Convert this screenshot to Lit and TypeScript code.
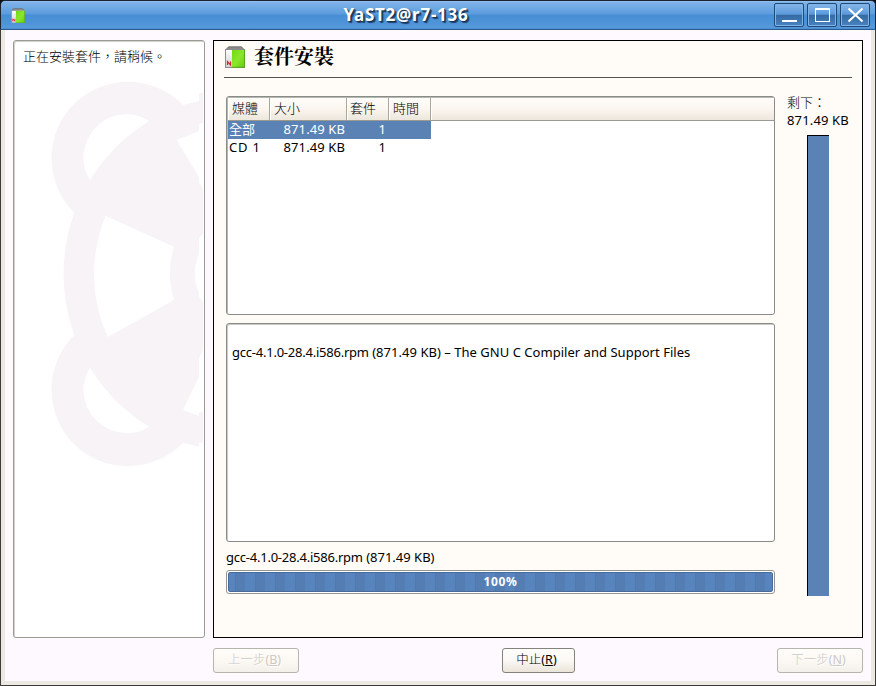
import { LitElement, html, css, svg } from "lit";
import { customElement, property } from "lit/decorators.js";

@customElement("package-icon")
class PackageIcon extends LitElement {
  @property({ type: Number }) size = 20;
  static styles = css`
    :host { display: block; line-height: 0; }
  `;
  render() {
    return html`<svg width=${this.size} height=${this.size * 1.1} viewBox="0 0 20 22">
      <defs>
        <linearGradient id="g" x1="0" y1="0" x2="1" y2="1">
          <stop offset="0" stop-color="#6fdc10"></stop>
          <stop offset="0.5" stop-color="#8be62e"></stop>
          <stop offset="1" stop-color="#62cf0a"></stop>
        </linearGradient>
        <linearGradient id="w" x1="0" y1="0" x2="0" y2="1">
          <stop offset="0" stop-color="#ffffff"></stop>
          <stop offset="1" stop-color="#cfcfd6"></stop>
        </linearGradient>
      </defs>
      <path d="M0.5 4 L3.5 0.8 H16.5 L19.5 4 Z" fill="#8c8c8c" stroke="#666" stroke-width="0.8"></path>
      <rect x="0.5" y="3.5" width="19" height="18" fill="url(#w)" stroke="#8b8b90"></rect>
      <path d="M7 4H19.5V21.5H7Z" fill="url(#g)"></path>
      <path d="M7 21.3H19.5V4" fill="none" stroke="#5aa51c"></path>
      ${svg`<path d="M2.500 19V15.500L5.500 19V15.500" fill="none" stroke="#e0202c" stroke-width="1.2"></path>`}
    </svg>`;
  }
}

@customElement("title-bar")
class TitleBar extends LitElement {
  static styles = css`
    :host {
      display: grid;
      grid-template-columns: 110px 1fr 110px;
      align-items: center;
      box-sizing: border-box;
      height: 30px;
      border: 1px solid #1d242b;
      border-top-color: #1c2630;
      border-bottom-color: #2b5c8d;
      border-radius: 5px 5px 0 0;
      background: linear-gradient(#a0c8f2 0, #80b3ea 1px, #6ea8e3 7px, #5c9bdc 13px, #478ed5 14px, #4b91d6 19px, #5698db 27px, #4686c8 28px);
    }
    .icon { padding: 1px 0 0 10px; }
    .title {
      text-align: center;
      color: #fff;
      font: bold 17px/26px "Noto Sans", sans-serif;
      letter-spacing: 0.75px;
      text-shadow: 1px 1px 1px #17324f, 2px 2px 1px #1d436b;
      padding-right: 64px;
    }
    .tools { display: flex; gap: 3px; justify-content: flex-end; padding-right: 5px; }
    .tool {
      box-sizing: border-box;
      width: 30px;
      height: 24px;
      border: 1px solid #1f4a77;
      border-radius: 2px;
      box-shadow: inset 0 0 0 1px #82b3e5;
      background: linear-gradient(#86b7ea, #5a99dc 47%, #3569a0 50%, #4784c3);
      display: block;
    }
    svg { display: block; }
  `;
  render() {
    return html`
      <div class="icon"><package-icon .size=${14}></package-icon></div>
      <div class="title">YaST2@r7-136</div>
      <div class="tools">
        <span class="tool"><svg width="28" height="22"><path d="M7 17H22" stroke="#fff" stroke-width="2"></path></svg></span>
        <span class="tool"><svg width="28" height="22"><rect x="7.5" y="4.500" width="14" height="13" fill="none" stroke="#fff" stroke-width="1"></rect><path d="M7 5H22" stroke="#fff" stroke-width="2"></path></svg></span>
        <span class="tool"><svg width="28" height="22"><path d="M7.500 4.500L21.500 17.500M21.500 4.500L7.500 17.500" stroke="#fff" stroke-width="2.1"></path></svg></span>
      </div>`;
  }
}

@customElement("help-panel")
class HelpPanel extends LitElement {
  static styles = css`
    :host {
      display: block;
      position: relative;
      box-sizing: border-box;
      background: #fff;
      border: 1px solid #9b9b96;
      border-radius: 3px;
      box-shadow: inset 1px 1px 0 #d3d3ce;
      padding: 7px 9px;
      font: 300 13px/16px "Noto Sans CJK TC", sans-serif;
      color: #000;
    }
    .mark { position: absolute; left: 37px; top: 39px; display: block; }
    .text { position: relative; }
  `;
  render() {
    return html`
      <svg class="mark" width="152" height="388" viewBox="153 30 456 1164">
        <path fill="#f7f3f7" fill-rule="evenodd" d="M549 105L597 93V69H609V158L597 163V184L530 210L597 322V338L609 355V490L597 505V552Q584 580 584 612Q584 645 597 670V680L609 697V840L597 865V920L549 1020L597 1038V1027H609V1118H597V1130L549 1118A227 227 0 0 1 382 1188A227 227 0 0 1 155 960A227 227 0 0 1 223 796A543 543 0 0 1 223 428A227 227 0 0 1 155 262A227 227 0 0 1 382 36A227 227 0 0 1 549 105Z
          M270 331A543 543 0 0 1 448 153A132 132 0 0 0 382 132A132 132 0 0 0 250 264A132 132 0 0 0 270 331Z
          M270 893A543 543 0 0 0 448 1070A132 132 0 0 1 382 1090A132 132 0 0 1 250 960A132 132 0 0 1 270 893Z
          M316 437L522 530Q498 610 522 690L324 801Q282 715 282 612Q282 525 316 437Z"></path>
      </svg>
      <div class="text">正在安裝套件，請稍候。</div>`;
  }
}

@customElement("media-table")
class MediaTable extends LitElement {
  static styles = css`
    :host {
      display: block;
      box-sizing: border-box;
      height: 219px;
      border: 1px solid #8b8b88;
      border-radius: 3px;
      box-shadow: inset 1px 1px 0 #b5b8b2;
      background: #fff;
      padding: 1px 0 0 1px;
      font: 13px/16px "Noto Sans", "Noto Sans CJK TC", sans-serif;
      color: #000;
    }
    .row { display: grid; grid-template-columns: 42px 77px 42px 42px 1fr; }
    .head {
      height: 23px;
      box-sizing: border-box;
      line-height: 20px;
      border-bottom: 1px solid #9b9a90;
      background: linear-gradient(#fffdfa, #fbf6ef 50%, #ece6dc);
      font-family: "Noto Sans CJK TC", sans-serif;
      font-weight: 300;
    }
    .head span { padding-left: 4px; border-right: 1px solid #aaa69c; box-shadow: inset 1px 0 0 #fff; }
    .head span:nth-child(3) { padding-left: 3px; }
    .head span:last-child { border: 0; }
    .body { width: 203px; height: 18px; grid-template-columns: 41px 77px 42px 43px; }
    .body span { white-space: nowrap; }
    .body span:first-child { padding-left: 1px; }
    .wide { letter-spacing: 0.8px; }
    .num { text-align: right; letter-spacing: 0.1px; padding-right: 1px; }
    .cnt { padding-right: 2px; }
    .on { background: #5b82b5; color: #fff; }
  `;
  private rows = [["全部", "871.49 KB", "1"], ["CD 1", "871.49 KB", "1"]];
  render() {
    return html`
      <div class="row head"><span>媒體</span><span>大小</span><span>套件</span><span>時間</span><span></span></div>
      ${this.rows.map((r, i) => html`<div class="row body ${i === 0 ? "on" : ""}">
        <span class=${i === 1 ? "wide" : ""}>${r[0]}</span><span class="num">${r[1]}</span><span class="num cnt">${r[2]}</span><span></span>
      </div>`)}`;
  }
}

@customElement("app-root")
class AppRoot extends LitElement {
  static styles = css`
    :host {
      display: flex;
      flex-direction: column;
      width: 876px;
      height: 686px;
      box-sizing: border-box;
      overflow: hidden;
      background: #0b0e12;
      font: 13px/17px "Noto Sans", "Noto Sans CJK TC", sans-serif;
      color: #000;
    }
    .frame {
      flex: 1;
      box-sizing: border-box;
      border: 1px solid #3f3b38;
      border-top: 0;
      background: #ece8e2;
      padding: 0 4px 4px;
      display: flex;
    }
    .client {
      flex: 1;
      display: flex;
      flex-direction: column;
      gap: 10px;
      background: #fdf9fe;
      padding: 10px 8px 8px;
    }
    .content { display: flex; gap: 8px; height: 598px; }
    help-panel { width: 192px; }
    .main {
      width: 650px;
      box-sizing: border-box;
      border: 1px solid #000;
      background: #fffcf7;
      padding: 0 10px 0 10px;
    }
    .heading {
      display: flex;
      align-items: center;
      gap: 9px;
      height: 37px;
      box-sizing: border-box;
      padding: 0 0 5px 1px;
      border-bottom: 1px solid #55534f;
      font: bold 20px/30px "Noto Serif CJK TC", "Noto Sans CJK TC", sans-serif;
    }
    .heading span { margin-top: -1px; }
    .cols { display: flex; gap: 12px; padding: 18px 0 0 2px; }
    .left { width: 549px; }
    .log {
      box-sizing: border-box;
      height: 219px;
      margin-top: 8px;
      padding: 20px 5px;
      background: #fff;
      border: 1px solid #8b8b88;
      border-radius: 3px;
      box-shadow: inset 1px 1px 0 #c9c9c5;
      letter-spacing: 0.03px;
    }
    .name { letter-spacing: -0.23px; }
    .file { height: 17px; margin: 7px 0 4px; }
    .bar {
      box-sizing: border-box;
      height: 24px;
      border: 1px solid #96948f;
      border-radius: 3px;
      background: #fff;
      padding: 1px;
    }
    .fill {
      box-sizing: border-box;
      height: 20px;
      border: 1px solid #486b9c;
      border-radius: 2px;
      background: linear-gradient(rgba(80, 125, 190, 0.25), rgba(80, 125, 175, 0.3)),
        repeating-linear-gradient(90deg, #5b87c1 0 6px, #4f77ae 6px 7px, #567db3 7px 16px, #5b87c1 16px 20px);
      color: #fff;
      font: bold 12px/17px "Noto Sans", sans-serif;
      letter-spacing: 0.7px;
      text-align: center;
    }
    .right { white-space: nowrap; }
    .cjk { line-height: 16px; height: 16px; font-weight: 300; font-family: "Noto Sans CJK TC", sans-serif; margin-top: -2px; padding-bottom: 2px; }
    .left-size { letter-spacing: 0.15px; }
    .gauge {
      width: 22px;
      height: 461px;
      box-sizing: border-box;
      margin: 6px 0 0 20px;
      background: #5b82b5;
      border-left: 1px solid #000;
      border-top: 1px solid #000;
    }
    .buttons { display: flex; justify-content: space-between; padding-left: 200px; }
    .btn {
      box-sizing: border-box;
      width: 86px;
      height: 25px;
      border: 1px solid #85827b;
      border-radius: 3px;
      background: linear-gradient(#fffefc, #fbf8f4 50%, #eae4da);
      text-align: center;
      font-weight: 300;
      font-size: 12.500px;
      line-height: 22px;
      white-space: nowrap;
      padding-right: 3px;
    }
    .off { border-color: #b5b5ac; color: #cbc9c5; text-shadow: 1px 1px 0 #fff; background: linear-gradient(#fffdfb, #fcf8f3 50%, #f3efe9); }
    .stop { width: 73px; }
    .latin { font-weight: 400; }
    u { text-underline-offset: 1px; }
  `;
  render() {
    return html`
      <title-bar></title-bar>
      <div class="frame"><div class="client">
        <div class="content">
          <help-panel></help-panel>
          <div class="main">
            <div class="heading"><package-icon .size=${20}></package-icon><span>套件安裝</span></div>
            <div class="cols">
              <div class="left">
                <media-table></media-table>
                <div class="log"><span class="name">gcc-4.1.0-28.4.i586.rpm</span> (871.49 KB) – The GNU C Compiler and Support Files</div>
                <div class="file"><span class="name">gcc-4.1.0-28.4.i586.rpm</span> (871.49 KB)</div>
                <div class="bar"><div class="fill">100%</div></div>
              </div>
              <div class="right">
                <div class="cjk">剩下：</div>
                <div class="left-size">871.49 KB</div>
                <div class="gauge"></div>
              </div>
            </div>
          </div>
        </div>
        <div class="buttons">
          <div class="btn off">上一步<span class="latin">(<u>B</u>)</span></div>
          <div class="btn stop">中止<span class="latin">(<u>R</u>)</span></div>
          <div class="btn off">下一步<span class="latin">(<u>N</u>)</span></div>
        </div>
      </div></div>`;
  }
}
